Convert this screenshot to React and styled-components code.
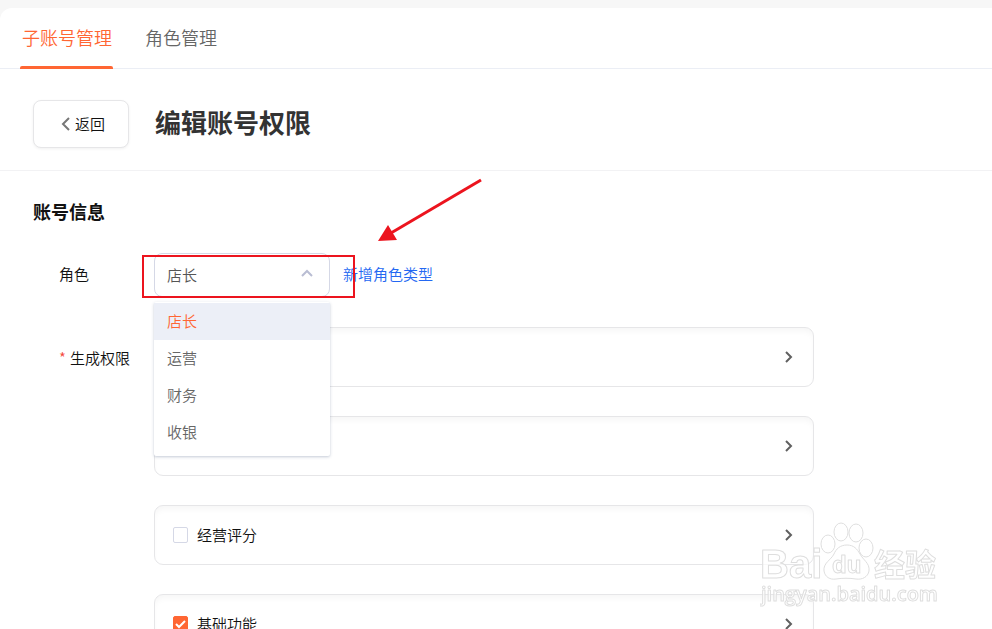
import React, { useState } from "react";
import styled, { createGlobalStyle } from "styled-components";

const GlobalStyle = createGlobalStyle`
  *, *::before, *::after { box-sizing: border-box; }
  body {
    margin: 0;
    background: #f7f7f7;
    color: #111;
    font: 350 15px/20px "Noto Sans CJK SC", sans-serif;
  }
  button, input, select { font: inherit; color: inherit; }
`;

const Page = styled.main`
  margin-top: 8px;
  background: #fff;
  border-radius: 12px 0 0 0;
`;

const Tabs = styled.nav`
  display: flex;
  gap: 30px;
  height: 61px;
  padding-left: 20px;
  border-bottom: 1px solid #ebeef5;
`;

const Tab = styled.button`
  position: relative;
  height: 61px;
  padding: 0 1px 4px 2px;
  border: 0;
  background: none;
  font-size: 18px;
  line-height: 24px;
  color: ${(p) => (p.$active ? "#ff6633" : "#666")};
  cursor: pointer;

  &::after {
    content: "";
    position: absolute;
    left: 0;
    right: 0;
    bottom: 0;
    height: 3px;
    border-radius: 2px 2px 0 0;
    background: ${(p) => (p.$active ? "#ff6633" : "transparent")};
  }
`;

const TitleBar = styled.header`
  display: flex;
  align-items: center;
  gap: 26px;
  padding: 31px 33px 22px;
  border-bottom: 1px solid #f2f2f4;
`;

const BackButton = styled.button`
  display: flex;
  align-items: center;
  justify-content: center;
  gap: 5px;
  width: 96px;
  height: 48px;
  padding: 0 0 0 4px;
  border: 1px solid #e6e6e8;
  border-radius: 8px;
  background: #fff;
  box-shadow: 0 1px 3px rgba(0, 0, 0, 0.06);
  cursor: pointer;
`;

const Title = styled.h1`
  margin: 0;
  padding-bottom: 4px;
  font-size: 26px;
  line-height: 36px;
  font-weight: 700;
  color: #333;
`;

const Section = styled.section`
  padding: 28px 33px 32px;
`;

const SectionTitle = styled.h2`
  margin: 0;
  font-size: 18px;
  line-height: 24px;
  font-weight: 700;
`;

const FormRow = styled.div`
  position: relative;
  display: flex;
  align-items: flex-start;
  padding-left: 26px;
  margin-top: ${(p) => p.$gap}px;
`;

const FieldLabel = styled.label`
  flex: none;
  width: 95px;
  padding-top: ${(p) => p.$top}px;
`;

const Required = styled.span`
  margin-right: 4px;
  color: #f5483b;
`;

const SelectBox = styled.div`
  position: relative;
  flex: none;
  width: 176px;
  height: 44px;
`;

const Select = styled.select`
  appearance: none;
  width: 100%;
  height: 100%;
  padding: 0 40px 0 12px;
  border: 1px solid #d5d8e6;
  border-radius: 8px;
  background: #fff;
  color: #555;
  outline: none;
`;

const SelectArrow = styled.svg`
  position: absolute;
  top: 16px;
  right: 17px;
  pointer-events: none;
  transform: ${(p) => (p.$open ? "none" : "rotate(180deg)")};
`;

const Menu = styled.ul`
  position: absolute;
  z-index: 2;
  top: 49px;
  left: 0;
  right: 0;
  margin: 0;
  padding: 1px 0 5px;
  list-style: none;
  background: #fff;
  border-radius: 2px;
  box-shadow: 0 1px 3px rgba(60, 80, 120, 0.3);
`;

const MenuItem = styled.button`
  display: block;
  width: 100%;
  height: 37px;
  padding: 0 13px 2px;
  border: 0;
  background: ${(p) => (p.$active ? "#eceff7" : "transparent")};
  color: ${(p) => (p.$active ? "#ff6633" : "#666")};
  text-align: left;
  cursor: pointer;
`;

const AddLink = styled.a`
  margin: 11px 0 0 13px;
  color: #2468f2;
  text-decoration: none;
`;

const Highlight = styled.div`
  position: absolute;
  z-index: 3;
  top: 2px;
  left: 109px;
  width: 213px;
  height: 43px;
  border: 2px solid #ec141e;
  pointer-events: none;
`;

const Arrow = styled.svg`
  position: absolute;
  z-index: 3;
  top: -76px;
  left: 343px;
  pointer-events: none;
`;

const CardList = styled.div`
  display: grid;
  gap: 29px;
  flex: 1;
  max-width: 660px;
`;

const Card = styled.div`
  display: flex;
  align-items: center;
  justify-content: space-between;
  height: 60px;
  padding: 0 17px 0 18px;
  border: 1px solid #e6e6e8;
  border-radius: 9px;
  box-shadow: inset 0 5px 6px -2px rgba(0, 0, 0, 0.04);
`;

const CheckLabel = styled.label`
  display: flex;
  align-items: center;
  gap: 9px;
  cursor: pointer;
`;

const CheckBox = styled.span`
  position: relative;
  display: grid;
  place-items: center;
  width: 15px;
  height: 16px;
`;

const CheckInput = styled.input`
  appearance: none;
  width: 15px;
  height: 16px;
  margin: 0;
  border: 1px solid #d5d8e6;
  border-radius: 2px;
  background: #fff;

  &:checked {
    border-color: #ff6633;
    background: #ff6633;
  }
`;

const Tick = styled.svg`
  position: absolute;
  top: 3px;
  left: 2px;
  pointer-events: none;
`;

const Expand = styled.button`
  display: grid;
  place-items: center;
  width: 14px;
  height: 20px;
  margin-left: auto;
  padding: 0;
  border: 0;
  background: none;
  cursor: pointer;
`;

const Watermark = styled.svg`
  position: fixed;
  z-index: 4;
  right: 52px;
  bottom: 17px;
  pointer-events: none;
`;

const roles = ["店长", "运营", "财务", "收银"];
const groups = [
  { id: "a" },
  { id: "b" },
  { id: "c", name: "经营评分" },
  { id: "d", name: "基础功能", checked: true },
];

function PermissionCard({ name, checked: initial = false }) {
  const [checked, setChecked] = useState(initial);
  return (
    <Card>
      {name && (
        <CheckLabel>
          <CheckBox>
            <CheckInput
              type="checkbox"
              checked={checked}
              onChange={(e) => setChecked(e.target.checked)}
            />
            {checked && (
              <Tick width="11" height="10" viewBox="0 0 11 10" fill="none">
                <path d="M1 5l3 3 6-6" stroke="#fff" strokeWidth="2" />
              </Tick>
            )}
          </CheckBox>
          {name}
        </CheckLabel>
      )}
      <Expand type="button" aria-label="展开">
        <svg width="10" height="12" viewBox="0 0 10 12" fill="none">
          <path d="M2 1l5 5-5 5" stroke="#606060" strokeWidth="2" />
        </svg>
      </Expand>
    </Card>
  );
}

function RoleSelect() {
  const [role, setRole] = useState(roles[0]);
  const [open, setOpen] = useState(true);
  return (
    <SelectBox>
      <Select
        id="role"
        value={role}
        onChange={(e) => setRole(e.target.value)}
        onMouseDown={(e) => {
          e.preventDefault();
          setOpen(!open);
        }}
      >
        {roles.map((r) => (
          <option key={r}>{r}</option>
        ))}
      </Select>
      <SelectArrow $open={open} width="12" height="9" viewBox="0 0 12 9" fill="none">
        <path d="M1 7l5-5 5 5" stroke="#b9bdd3" strokeWidth="2" />
      </SelectArrow>
      {open && (
        <Menu>
          {roles.map((r) => (
            <li key={r}>
              <MenuItem
                type="button"
                $active={r === role}
                onClick={() => {
                  setRole(r);
                  setOpen(false);
                }}
              >
                {r}
              </MenuItem>
            </li>
          ))}
        </Menu>
      )}
    </SelectBox>
  );
}

function BaiduWatermark() {
  return (
    <Watermark width="180" height="90" viewBox="0 0 180 90" aria-hidden="true">
      <g
        fill="#fff"
        fillOpacity="0.7"
        stroke="#dedede"
        strokeWidth="1"
        strokeLinejoin="round"
      >
        <text x="0" y="56" fontFamily="Liberation Sans" fontWeight="700" fontSize="40">
          Bai
        </text>
        <ellipse cx="68" cy="22" rx="7" ry="9" />
        <ellipse cx="81" cy="10" rx="7" ry="9" />
        <ellipse cx="96" cy="11" rx="7" ry="9" />
        <ellipse cx="106" cy="26" rx="7" ry="9" />
        <path d="M87 23c-7 0-11 4-13 9-3 6-11 9-10 17 1 6 6 9 12 8 7-1 13-1 20 0 6 1 12-2 13-8 1-8-6-11-9-17-3-5-6-9-13-9z" />
        <text x="72" y="51" fontFamily="Liberation Sans" fontWeight="700" fontSize="24">
          du
        </text>
        <text x="114" y="54" fontFamily="Noto Sans CJK SC" fontWeight="700" fontSize="31">
          经验
        </text>
        <text x="1" y="79" fontFamily="Open Sans" fontWeight="600" fontSize="20">
          jingyan.baidu.com
        </text>
      </g>
    </Watermark>
  );
}

export default function App() {
  const [tab, setTab] = useState("子账号管理");
  return (
    <>
      <GlobalStyle />
      <Page>
        <Tabs>
          {["子账号管理", "角色管理"].map((name) => (
            <Tab key={name} type="button" $active={name === tab} onClick={() => setTab(name)}>
              {name}
            </Tab>
          ))}
        </Tabs>
        <TitleBar>
          <BackButton type="button">
            <svg width="9" height="14" viewBox="0 0 9 14" fill="none">
              <path d="M8 1L2 7l6 6" stroke="#777" strokeWidth="2" />
            </svg>
            返回
          </BackButton>
          <Title>编辑账号权限</Title>
        </TitleBar>
        <Section>
          <SectionTitle>账号信息</SectionTitle>
          <FormRow $gap={30}>
            <FieldLabel htmlFor="role" $top={11}>
              角色
            </FieldLabel>
            <RoleSelect />
            <AddLink href="#new-role">新增角色类型</AddLink>
            <Highlight />
            <Arrow width="110" height="68" viewBox="0 0 110 68">
              <path d="M105 3L15 56" stroke="#ec141e" strokeWidth="3" />
              <path d="M2 64L12 48L21 63z" fill="#ec141e" />
            </Arrow>
          </FormRow>
          <FormRow $gap={30}>
            <FieldLabel as="div" $top={21}>
              <Required>*</Required>
              生成权限
            </FieldLabel>
            <CardList>
              {groups.map(({ id, ...group }) => (
                <PermissionCard key={id} {...group} />
              ))}
            </CardList>
          </FormRow>
        </Section>
      </Page>
      <BaiduWatermark />
    </>
  );
}
